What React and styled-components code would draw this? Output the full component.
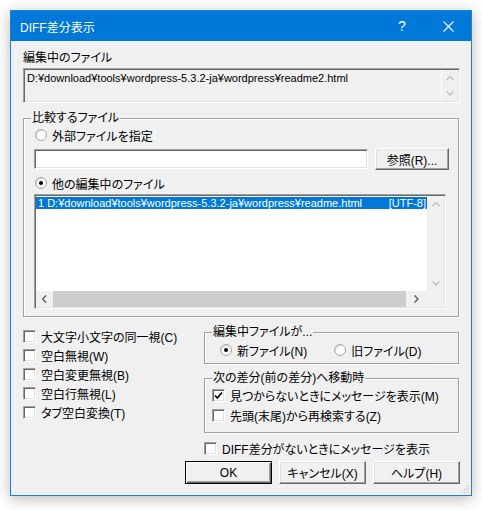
import React from "react";
import styled, { createGlobalStyle } from "styled-components";

const font = '"Liberation Sans", "Noto Sans CJK JP", sans-serif';

const GlobalStyle = createGlobalStyle`
  html, body {
    margin: 0;
    background: #fff;
  }
  body {
    font-family: ${font};
    font-size: 12px;
    font-feature-settings: "palt";
    color: #000;
  }
  * {
    box-sizing: border-box;
  }
`;

const Page = styled.div`
  width: 482px;
  height: 510px;
  padding: 10px;
`;

const Window = styled.div`
  position: relative;
  width: 462px;
  height: 486px;
  border: 1px solid #1883d7;
  background: #f0f0f0;
  box-shadow: 0 3px 14px rgba(0, 0, 0, 0.28);
  display: flex;
  flex-direction: column;
`;

const TitleBar = styled.div`
  height: 30px;
  background: #0078d7;
  color: #fff;
  display: flex;
  align-items: center;
  padding-left: 9px;
  flex-shrink: 0;
`;

const Title = styled.div`
  flex: 1;
  font-size: 12px;
`;

const CaptionButton = styled.div`
  width: 46px;
  height: 30px;
  display: flex;
  align-items: center;
  justify-content: center;
  font-size: 14px;
  color: #fff;
`;

const Body = styled.div`
  flex: 1;
  padding: 10px 11px 0 12px;
  display: flex;
  flex-direction: column;
`;

const Label = styled.div`
  line-height: 14px;
  margin-bottom: 3px;
  white-space: nowrap;
`;

const Path = styled.span`
  font-size: 11px;
`;

const sunken = `
  border: 1px solid;
  border-color: #a0a0a0 #fff #fff #a0a0a0;
  padding: 1px;
  box-shadow: inset 1px 1px 0 #696969, inset -1px -1px 0 #e3e3e3;
`;

const ReadonlyEdit = styled.div`
  ${sunken}
  height: 35px;
  width: 437px;
  display: flex;
  background: #f0f0f0;
`;

const EditText = styled.div`
  flex: 1;
  padding: 2px 2px;
  line-height: 12px;
  white-space: nowrap;
`;

const VScroll = styled.div`
  width: ${(p) => p.$w || 17}px;
  border-left: 1px solid ${(p) => (p.$edge ? "#fff" : "#f0f0f0")};
  background: #f0f0f0;
  display: flex;
  flex-direction: column;
  justify-content: space-between;
  align-items: center;
  padding: 6px 0 5px;
`;

const Group = styled.fieldset`
  margin: 0;
  padding: ${(p) => p.$pad || "3px 9px 7px 10px"};
  border: 1px solid #a0a0a0;
  box-shadow: 1px 1px 0 #fff, inset 1px 1px 0 #fff;
  min-width: 0;
  width: ${(p) => p.$w}px;
  margin-top: ${(p) => p.$mt || 0}px;
`;

const Legend = styled.legend`
  padding: 0 1px;
  margin-left: ${(p) => p.$ml || 0}px;
  line-height: 14px;
  background: #f0f0f0;
  white-space: nowrap;
`;

const OptionRow = styled.label`
  display: flex;
  align-items: center;
  height: ${(p) => p.$h || 14}px;
  margin-top: ${(p) => p.$mt || 0}px;
  margin-left: ${(p) => p.$ml || 0}px;
  white-space: nowrap;
  gap: ${(p) => p.$gap || 5}px;
`;

const RadioCircle = styled.span`
  width: 12px;
  height: 12px;
  border-radius: 50%;
  border: 1px solid #a8a8a8;
  background: #fff;
  box-shadow: inset 1px 1px 0 #d8d8d8;
  display: flex;
  align-items: center;
  justify-content: center;
  flex-shrink: 0;
  &::after {
    content: "";
    width: 4px;
    height: 4px;
    border-radius: 50%;
    background: ${(p) => (p.$on ? "#000" : "transparent")};
  }
`;

const CheckBox = styled.span`
  width: 13px;
  height: 13px;
  border: 1px solid;
  border-color: #a0a0a0 #fff #fff #a0a0a0;
  box-shadow: inset 1px 1px 0 #696969, inset -1px -1px 0 #e3e3e3;
  background: #fff;
  flex-shrink: 0;
  display: flex;
  align-items: center;
  justify-content: center;
`;

const BrowseRow = styled.div`
  display: flex;
  align-items: center;
  justify-content: space-between;
  margin-top: 6px;
  height: 22px;
`;

const TextInput = styled.div`
  ${sunken}
  width: 334px;
  height: 20px;
  background: #fff;
`;

const Button = styled.div`
  width: ${(p) => p.$w || 88}px;
  height: ${(p) => p.$h || 23}px;
  display: flex;
  align-items: center;
  justify-content: center;
  background: #f0f0f0;
  border: 1px solid;
  border-color: ${(p) =>
    p.$default ? "#000" : "#fff #696969 #696969 #fff"};
  box-shadow: ${(p) =>
    p.$default
      ? "inset 1px 1px 0 #fff, inset -1px -1px 0 #696969, inset -2px -2px 0 #a0a0a0"
      : "inset -1px -1px 0 #a0a0a0, inset 1px 1px 0 #e3e3e3"};
  white-space: nowrap;
`;

const ListBox = styled.div`
  ${sunken}
  width: 412px;
  height: 115px;
  margin-top: 4px;
  background: #fff;
  display: flex;
  flex-direction: column;
`;

const ListMain = styled.div`
  flex: 1;
  display: flex;
  min-height: 0;
`;

const ListRows = styled.div`
  flex: 1;
`;

const ListRow = styled.div`
  display: flex;
  justify-content: space-between;
  height: 12px;
  line-height: 12px;
  margin-top: 1px;
  padding: 0 1px 0 2px;
  font-size: 11px;
  white-space: nowrap;
  background: ${(p) => (p.$selected ? "#0078d7" : "transparent")};
  color: ${(p) => (p.$selected ? "#fff" : "#000")};
`;

const HScrollRow = styled.div`
  height: 16px;
  display: flex;
`;

const HScroll = styled.div`
  flex: 1;
  background: #f0f0f0;
  display: flex;
  align-items: center;
`;

const HArrow = styled.div`
  width: ${(p) => p.$w}px;
  display: flex;
  align-items: center;
  justify-content: center;
`;

const HThumb = styled.div`
  flex: 1;
  height: 16px;
  background: #cdcdcd;
`;

const Corner = styled.div`
  width: 17px;
  background: #f0f0f0;
`;

const Lower = styled.div`
  display: grid;
  grid-template-columns: 181px 255px;
  margin-top: 6px;
`;

const CheckList = styled.div`
  display: flex;
  flex-direction: column;
  padding-top: 4px;
`;

const RightColumn = styled.div`
  display: flex;
  flex-direction: column;
  padding-top: 2px;
`;

const RadioPair = styled.div`
  display: flex;
  align-items: center;
  height: 14px;
  margin-left: 5px;
  gap: 27px;
`;

const ButtonRow = styled.div`
  display: flex;
  gap: 7px;
  margin-top: 4px;
  margin-left: 162px;
`;

const SizeGrip = styled.svg`
  position: absolute;
  right: 1px;
  bottom: 1px;
`;

function Chevron({ dir, color }) {
  const pts = {
    up: "0,4 3.5,0.5 7,4",
    down: "0,0.5 3.5,4 7,0.5",
    left: "4,0 0.5,3.5 4,7",
    right: "0.5,0 4,3.5 0.5,7",
  }[dir];
  const vertical = dir === "up" || dir === "down";
  return (
    <svg width={vertical ? 8 : 5} height={vertical ? 5 : 8} viewBox={vertical ? "0 0 7 5" : "0 0 5 7"}>
      <polyline points={pts} fill="none" stroke={color} strokeWidth="1.5" />
    </svg>
  );
}

function Check({ checked, children, mt, h, gap }) {
  return (
    <OptionRow $mt={mt} $h={h} $gap={gap}>
      <CheckBox>
        {checked && (
          <svg width="9" height="9" viewBox="0 0 9 9">
            <polyline points="1,4.5 3.3,7 8,1.5" fill="none" stroke="#000" strokeWidth="1.7" />
          </svg>
        )}
      </CheckBox>
      <span>{children}</span>
    </OptionRow>
  );
}

function Radio({ on, children, mt, ml }) {
  return (
    <OptionRow $mt={mt} $ml={ml}>
      <RadioCircle $on={on} />
      <span>{children}</span>
    </OptionRow>
  );
}

export default function App() {
  return (
    <Page>
      <GlobalStyle />
      <Window>
        <TitleBar>
          <Title>DIFF差分表示</Title>
          <CaptionButton>?</CaptionButton>
          <CaptionButton>
            <svg width="11" height="11" viewBox="0 0 11 11">
              <path d="M0.5 0.5 L10.5 10.5 M10.5 0.5 L0.5 10.5" stroke="#fff" strokeWidth="1.1" />
            </svg>
          </CaptionButton>
        </TitleBar>
        <Body>
          <Label>編集中のファイル</Label>
          <ReadonlyEdit>
            <EditText>
              <Path>D:¥download¥tools¥wordpress-5.3.2-ja¥wordpress¥readme2.html</Path>
            </EditText>
            <VScroll $edge $w={17}>
              <Chevron dir="up" color="#c2c2c2" />
              <Chevron dir="down" color="#c2c2c2" />
            </VScroll>
          </ReadonlyEdit>

          <Group $w={436} $mt={8}>
            <Legend $ml={-3}>比較するファイル</Legend>
            <Radio ml={1}>外部ファイルを指定</Radio>
            <BrowseRow>
              <TextInput />
              <Button $w={74} $h={22}>参照(R)...</Button>
            </BrowseRow>
            <Radio on mt={6} ml={1}>他の編集中のファイル</Radio>
            <ListBox>
              <ListMain>
                <ListRows>
                  <ListRow $selected>
                    <span>1 D:¥download¥tools¥wordpress-5.3.2-ja¥wordpress¥readme.html</span>
                    <span>[UTF-8]</span>
                  </ListRow>
                </ListRows>
                <VScroll $w={17}>
                  <Chevron dir="up" color="#c2c2c2" />
                  <Chevron dir="down" color="#c2c2c2" />
                </VScroll>
              </ListMain>
              <HScrollRow>
                <HScroll>
                  <HArrow $w={17}>
                    <Chevron dir="left" color="#606060" />
                  </HArrow>
                  <HThumb />
                  <HArrow $w={21}>
                    <Chevron dir="right" color="#606060" />
                  </HArrow>
                </HScroll>
                <Corner />
              </HScrollRow>
            </ListBox>
          </Group>

          <Lower>
            <CheckList>
              <Check h={19}>大文字小文字の同一視(C)</Check>
              <Check h={19}>空白無視(W)</Check>
              <Check h={19}>空白変更無視(B)</Check>
              <Check h={19}>空白行無視(L)</Check>
              <Check h={19}>タブ空白変換(T)</Check>
            </CheckList>
            <RightColumn>
              <Group $w={255} $pad="4px 9px 6px 10px">
                <Legend $ml={-3}>編集中ファイルが...</Legend>
                <RadioPair>
                  <Radio on>新ファイル(N)</Radio>
                  <Radio>旧ファイル(D)</Radio>
                </RadioPair>
              </Group>
              <Group $w={255} $mt={7} $pad="0 9px 7px 7px">
                <Legend $ml={0}>次の差分(前の差分)へ移動時</Legend>
                <Check checked h={20}>見つからないときにメッセージを表示(M)</Check>
                <Check h={20}>先頭(末尾)から再検索する(Z)</Check>
              </Group>
              <OptionRow $h={18} $mt={6} $gap={5}>
                <CheckBox />
                <span>DIFF差分がないときにメッセージを表示</span>
              </OptionRow>
            </RightColumn>
          </Lower>

          <ButtonRow>
            <Button $default>OK</Button>
            <Button>キャンセル(X)</Button>
            <Button>ヘルプ(H)</Button>
          </ButtonRow>
        </Body>
        <SizeGrip width="10" height="10" viewBox="0 0 10 10">
          <path d="M9 1 L1 9 M9 4 L4 9 M9 7 L7 9" stroke="#b8b8b8" strokeWidth="1" strokeDasharray="1 1" />
        </SizeGrip>
      </Window>
    </Page>
  );
}
